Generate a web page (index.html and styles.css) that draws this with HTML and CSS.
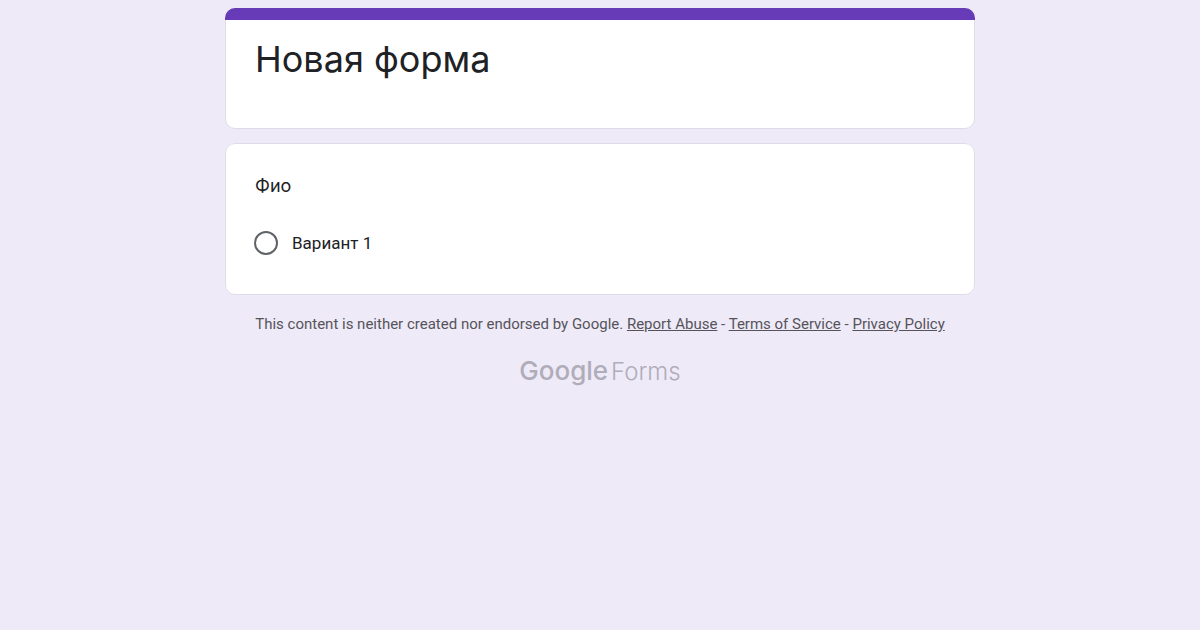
FILE: index.html
```
<!DOCTYPE html>
<html lang="ru">
<head>
  <meta charset="UTF-8">
  <meta name="viewport" content="width=device-width, initial-scale=1.0">
  <title>Новая форма</title>
  <link rel="stylesheet" href="styles.css">
</head>
<body>

<main class="container">
  <form class="form">
    <header class="card form-header">
      <h1>Новая форма</h1>
    </header>

    <fieldset class="card question">
      <legend>Фио</legend>
      <label class="option">
        <input type="radio" name="fio" value="Вариант 1">
        <span>Вариант 1</span>
      </label>
    </fieldset>
  </form>

  <footer>
    <p class="legal">
      This content is neither created nor endorsed by Google.
      <a href="#report">Report Abuse</a> - <a href="#terms">Terms of Service</a> - <a href="#privacy">Privacy Policy</a>
    </p>
    <a class="logo" href="#forms"><span class="logo-google">Google</span><span class="logo-forms">Forms</span></a>
  </footer>
</main>

</body>
</html>
```
FILE: styles.css
```
:root {
  --purple: #673ab7;
  --page: #eeeaf8;
  --line: #dfdbe8;
}

* {
  box-sizing: border-box;
}

body {
  margin: 0;
  background: var(--page);
  color: #202124;
  font-family: Roboto, sans-serif;
}

.container {
  max-width: 750px;
  margin: 0 auto;
  padding: 8px 0;
}

.form {
  display: flex;
  flex-direction: column;
  gap: 14px;
}

.card {
  margin: 0;
  background: white;
  border: 1px solid var(--line);
  border-radius: 10px;
}

.form-header {
  padding: 0 29px 46px;
}

/* coloured strip along the top of the first card */
.form-header::before {
  content: "";
  display: block;
  height: 12px;
  margin: -1px -30px 0;
  background: var(--purple);
  border-radius: 10px 10px 0 0;
}

h1 {
  margin: 0;
  padding-top: 16px;
  font-family: Inter, sans-serif;
  font-size: 36px;
  font-weight: 400;
  line-height: 46px;
}

.question {
  padding: 28px 29px 39px;
}

.question legend {
  float: left;
  width: 100%;
  margin-bottom: 31px;
  padding: 0;
  font-family: Inter, sans-serif;
  font-size: 18px;
  line-height: 28px;
}

.option {
  clear: both;
  display: flex;
  align-items: center;
  gap: 14px;
  font-size: 17px;
  line-height: 24px;
}

.option input {
  appearance: none;
  width: 24px;
  height: 24px;
  margin: 0 0 0 -1px;
  border: 2px solid #5f6368;
  border-radius: 50%;
  background: white;
}

.option input:checked {
  border-color: var(--purple);
  background: radial-gradient(var(--purple) 45%, white 50%);
}

footer {
  text-align: center;
}

.legal {
  margin: 18px 0 20px;
  color: #56545a;
  font-size: 15px;
  line-height: 22px;
}

.legal a {
  color: inherit;
}

.logo {
  display: inline-flex;
  align-items: baseline;
  gap: 3px;
  color: #b0adb8;
  font-family: Inter, sans-serif;
  font-size: 26px;
  line-height: 32px;
  text-decoration: none;
}

.logo-google {
  font-weight: 500;
}

.logo-forms {
  font-size: 24px;
  font-weight: 300;
}
```
